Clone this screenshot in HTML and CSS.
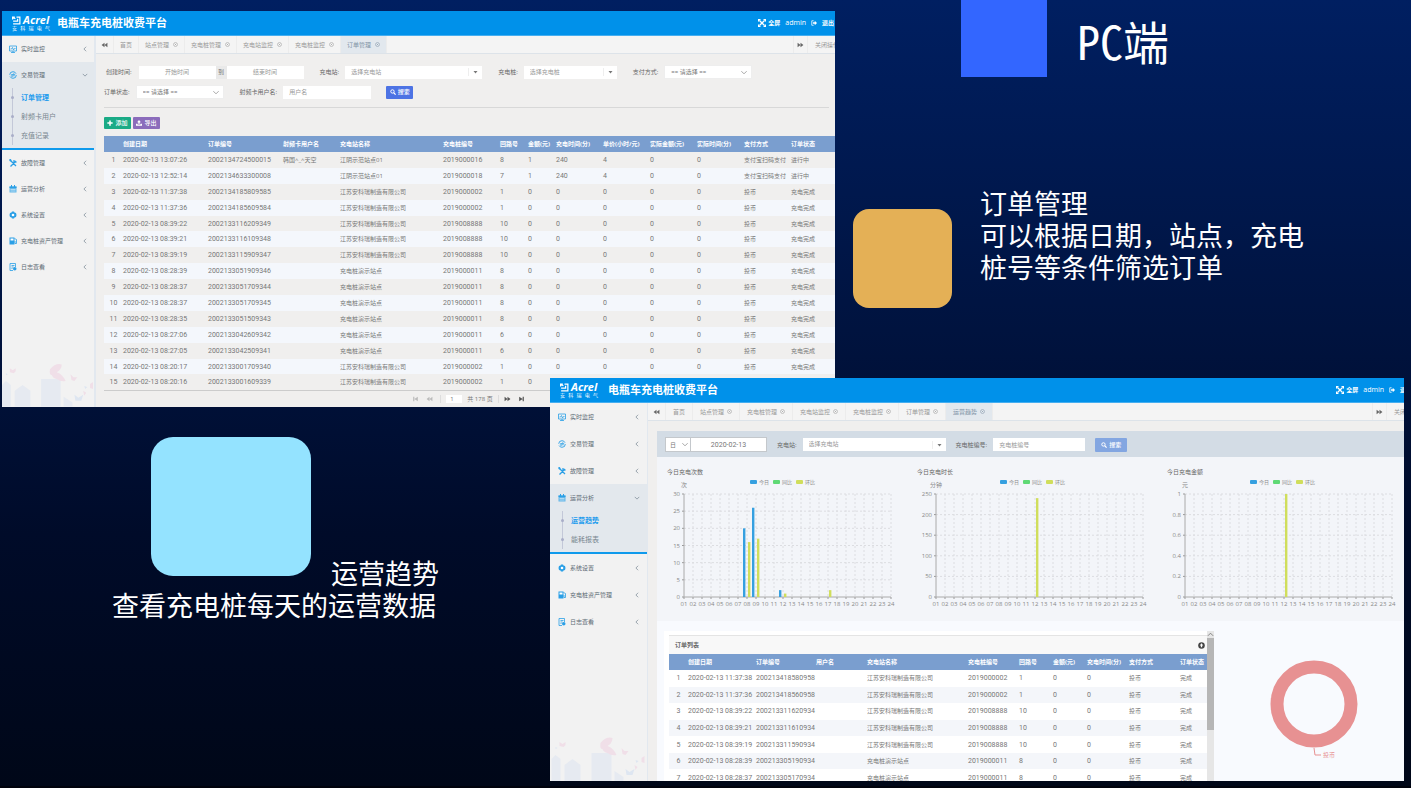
FILE: index.html
```html
<!DOCTYPE html>
<html lang="zh-CN">
<head>
<meta charset="utf-8">
<title>PC端</title>
<link rel="stylesheet" href="styles.css">
</head>
<body>
<svg class="sprite" aria-hidden="true">
  <symbol id="i-logo" viewBox="0 0 16 16"><path d="M8 2h6v12H2M2 9h8V5M1 2l5 3M1 6V2h4" fill="none" stroke="currentColor" stroke-width="2.2"/></symbol>
  <symbol id="i-monitor" viewBox="0 0 16 16"><path d="M1 2h14v10H1zM4 15h8M8 12v3M3 8h2l2-3 2 5 2-3h2" fill="none" stroke="currentColor" stroke-width="1.6"/></symbol>
  <symbol id="i-trade" viewBox="0 0 16 16"><circle cx="8" cy="8" r="6.6" fill="none" stroke="currentColor" stroke-width="1.8" stroke-dasharray="17 3.7"/><path d="M4.500 7h7l-2.500-2.500M11.500 9.500h-7L7 12" fill="none" stroke="currentColor" stroke-width="1.6"/></symbol>
  <symbol id="i-tools" viewBox="0 0 16 16"><path d="M2 2l12 12M14 4l-3 3L3 15M10 2l0 4 5 0" fill="none" stroke="currentColor" stroke-width="2.6"/><path d="M0 1l4-1 1 4-3 1z" fill="currentColor"/></symbol>
  <symbol id="i-cal" viewBox="0 0 16 16"><path d="M1 3h14v12H1z" fill="currentColor" opacity=".7"/><path d="M1 3h14v3H1zM4 0h2v4H4zM10 0h2v4h-2z" fill="currentColor"/><path d="M3 9h10M3 12h10" stroke="#fff" stroke-width="1"/></symbol>
  <symbol id="i-gear" viewBox="0 0 16 16"><path d="M6 1h4l1 2 3 1 1 4-1 4-3 1-1 2H6l-1-2-3-1-1-4 1-4 3-1z" fill="currentColor"/><circle cx="8" cy="8" r="2.6" fill="#fff"/></symbol>
  <symbol id="i-pump" viewBox="0 0 16 16"><path d="M1 1h10v14H1z" fill="currentColor"/><path d="M3 3h6v4H3z" fill="#fff"/><path d="M11 3l4 2v8h-3V8" fill="none" stroke="currentColor" stroke-width="1.6"/></symbol>
  <symbol id="i-log" viewBox="0 0 16 16"><path d="M2 1h11v7M2 1v14h6M5 5h6M5 8h4M5 11h2" fill="none" stroke="currentColor" stroke-width="1.6"/><circle cx="11.500" cy="11.500" r="3.500" fill="currentColor"/></symbol>
  <symbol id="i-left" viewBox="0 0 8 8"><path d="M5.500 1L2.500 4l3 3" fill="none" stroke="currentColor" stroke-width="1"/></symbol>
  <symbol id="i-down" viewBox="0 0 8 8"><path d="M1 2.500L4 5.500l3-3" fill="none" stroke="currentColor" stroke-width="1"/></symbol>
  <symbol id="i-caret" viewBox="0 0 8 8"><path d="M2 3h4L4 5.500z" fill="currentColor"/></symbol>
  <symbol id="i-close" viewBox="0 0 10 10"><circle cx="5" cy="5" r="4" fill="none" stroke="currentColor" stroke-width="1"/><path d="M3.500 3.500l3 3M6.500 3.500l-3 3" stroke="currentColor" stroke-width="1"/></symbol>
  <symbol id="i-back" viewBox="0 0 12 10"><path d="M6 1v8L1 5zM11 1v8L6 5z" fill="currentColor"/></symbol>
  <symbol id="i-fwd" viewBox="0 0 12 10"><path d="M1 1v8l5-4zM6 1v8l5-4z" fill="currentColor"/></symbol>
  <symbol id="i-first" viewBox="0 0 12 10"><path d="M2 1h2v8H2zM10 1v8L4 5z" fill="currentColor"/></symbol>
  <symbol id="i-last" viewBox="0 0 12 10"><path d="M8 1h2v8H8zM2 1v8l6-4z" fill="currentColor"/></symbol>
  <symbol id="i-full" viewBox="0 0 16 16"><path d="M3 3l10 10M13 3L3 13" stroke="currentColor" stroke-width="2.600"/><path d="M0 0h6L0 6zM16 0v6l-6-6zM0 16v-6l6 6zM16 16h-6l6-6z" fill="currentColor"/></symbol>
  <symbol id="i-exit" viewBox="0 0 16 16"><path d="M7 2H2v12h5" fill="none" stroke="currentColor" stroke-width="2"/><path d="M5 6h5V2l6 6-6 6v-4H5z" fill="currentColor"/></symbol>
  <symbol id="i-search" viewBox="0 0 16 16"><circle cx="6.500" cy="6.500" r="4.500" fill="none" stroke="currentColor" stroke-width="2.600"/><path d="M10 10l5 5" stroke="currentColor" stroke-width="3"/></symbol>
  <symbol id="i-plus" viewBox="0 0 16 16"><path d="M8 1v14M1 8h14" stroke="currentColor" stroke-width="4"/></symbol>
  <symbol id="i-export" viewBox="0 0 16 16"><path d="M8 0l5 6h-3v4H6V6H3zM0 10h4v2h8v-2h4v5H0z" fill="currentColor"/></symbol>
  <symbol id="i-up" viewBox="0 0 16 16"><circle cx="8" cy="8" r="7.500" fill="currentColor"/><path d="M8 3l4 5H9.500v4h-3V8H4z" fill="#fff"/></symbol>
  <symbol id="i-city" viewBox="0 0 94 46">
    <g fill="#e6eaf1"><path d="M0 24l4-4 5 4v22H0zM13 30l8-6 8 6v16H13zM40 18h20v28H40zM63 36l9 6v4h-9z"/></g>
    <g fill="#f0dfe8"><path d="M8 7l3 2 3-2v3l-2 2-4-1zM49 8q6-7 12-5 0 5-5 8 6 2 9 9-5 1-9-2-4-1-5-4-3 0-2-6zM70 13l3 3 4 0-3 4-3-1zM90 23l3-2v7l-3-1zM83 30l3 2-2 3z"/></g>
    <g fill="#dee6f1"><path d="M74 34l4 3 5-3-2 6-6 0zM84 25l3 1-2 2zM4 12l2 1-2 1z"/></g>
  </symbol>
</svg>

<main class="slide">
  <section class="win win-orders">
    <header class="bar">
      <div class="logo"><div class="logo-top"><svg><use href="#i-logo"/></svg><span>Acrel</span></div><div class="logo-sub"><span>安</span><span>科</span><span>瑞</span><span>电</span><span>气</span></div></div>
      <h2>电瓶车充电桩收费平台</h2>
      <nav class="user"><a href="#"><svg class="fs"><use href="#i-full"/></svg><b>全屏</b></a><a href="#">admin</a><a href="#"><svg><use href="#i-exit"/></svg></a><a href="#"><b>退出</b></a></nav>
    </header>
    <div class="body">
      <nav class="side">
        <a class="item" href="#"><svg><use href="#i-monitor"/></svg><span>实时监控</span><svg class="arr"><use href="#i-left"/></svg></a>
        <div class="open">
          <a class="item" href="#"><svg><use href="#i-trade"/></svg><span>交易管理</span><svg class="arr"><use href="#i-down"/></svg></a>
          <div class="subs"><a class="on" href="#">订单管理</a><a href="#">射频卡用户</a><a href="#">充值记录</a></div>
        </div>
        <a class="item" href="#"><svg><use href="#i-tools"/></svg><span>故障管理</span><svg class="arr"><use href="#i-left"/></svg></a>
        <a class="item" href="#"><svg><use href="#i-cal"/></svg><span>运营分析</span><svg class="arr"><use href="#i-left"/></svg></a>
        <a class="item" href="#"><svg><use href="#i-gear"/></svg><span>系统设置</span><svg class="arr"><use href="#i-left"/></svg></a>
        <a class="item" href="#"><svg><use href="#i-pump"/></svg><span>充电桩资产管理</span><svg class="arr"><use href="#i-left"/></svg></a>
        <a class="item" href="#"><svg><use href="#i-log"/></svg><span>日志查看</span><svg class="arr"><use href="#i-left"/></svg></a>
        <svg class="city"><use href="#i-city"/></svg>
      </nav>
      <div class="content">
        <nav class="tabs">
          <button class="step" aria-label="向左"><svg><use href="#i-back"/></svg></button>
          <a href="#">首页</a>
          <a href="#">站点管理<svg><use href="#i-close"/></svg></a>
          <a href="#">充电桩管理<svg><use href="#i-close"/></svg></a>
          <a href="#">充电站监控<svg><use href="#i-close"/></svg></a>
          <a href="#">充电桩监控<svg><use href="#i-close"/></svg></a>
          <a class="on" href="#">订单管理<svg><use href="#i-close"/></svg></a>
          <button class="step end" aria-label="向右"><svg><use href="#i-fwd"/></svg></button>
          <button class="ops">关闭操作</button>
        </nav>
        <div class="page">
          <form class="filters">
            <div class="frow">
              <label class="lab" for="d1">创建时间:</label>
              <div class="range"><input id="d1" placeholder="开始时间"><span>到</span><input aria-label="结束时间" placeholder="结束时间"></div>
              <label class="lab" for="s1">充电站:</label>
              <div class="pick w137"><select id="s1"><option>选择充电站</option></select><svg><use href="#i-caret"/></svg></div>
              <label class="lab" for="s2">充电桩:</label>
              <div class="pick w93"><select id="s2"><option>选择充电桩</option></select><svg><use href="#i-caret"/></svg></div>
              <label class="lab" for="s3">支付方式:</label>
              <div class="pick plain w87"><select id="s3"><option>== 请选择 ==</option></select><svg><use href="#i-down"/></svg></div>
            </div>
            <div class="frow second">
              <label class="lab" for="s4">订单状态:</label>
              <div class="pick plain w87"><select id="s4"><option>== 请选择 ==</option></select><svg><use href="#i-down"/></svg></div>
              <label class="lab" for="u1">射频卡用户名:</label>
              <input class="w87" id="u1" placeholder="用户名">
              <button class="btn search" type="button"><svg><use href="#i-search"/></svg>搜索</button>
            </div>
          </form>
          <div class="actions"><button class="btn add"><svg><use href="#i-plus"/></svg>添加</button><button class="btn export"><svg><use href="#i-export"/></svg>导出</button></div>
          <table class="grid" id="orders"></table>
          <div class="pager">
            <button class="dim" aria-label="第一页"><svg><use href="#i-first"/></svg></button><button class="dim" aria-label="上一页"><svg><use href="#i-back"/></svg></button>
            <i></i><input aria-label="页码" value="1"><span>共 178 页</span><i></i>
            <button aria-label="下一页"><svg><use href="#i-fwd"/></svg></button><button aria-label="最后一页"><svg><use href="#i-last"/></svg></button>
          </div>
        </div>
      </div>
    </div>
  </section>

  <div class="square"></div>
  <h1 class="title">PC端</h1>
  <div class="amber"></div>
  <p class="note note-orders">订单管理<br>可以根据日期，站点，充电桩号等条件筛选订单</p>
  <div class="cyan"></div>
  <p class="note note-trend">运营趋势<br>查看充电桩每天的运营数据</p>

  <section class="win win-trend">
    <header class="bar">
      <div class="logo"><div class="logo-top"><svg><use href="#i-logo"/></svg><span>Acrel</span></div><div class="logo-sub"><span>安</span><span>科</span><span>瑞</span><span>电</span><span>气</span></div></div>
      <h2>电瓶车充电桩收费平台</h2>
      <nav class="user"><a href="#"><svg class="fs"><use href="#i-full"/></svg><b>全屏</b></a><a href="#">admin</a><a href="#"><svg><use href="#i-exit"/></svg></a><a href="#"><b>退出</b></a></nav>
    </header>
    <div class="body">
      <nav class="side">
        <a class="item" href="#"><svg><use href="#i-monitor"/></svg><span>实时监控</span><svg class="arr"><use href="#i-left"/></svg></a>
        <a class="item" href="#"><svg><use href="#i-trade"/></svg><span>交易管理</span><svg class="arr"><use href="#i-left"/></svg></a>
        <a class="item" href="#"><svg><use href="#i-tools"/></svg><span>故障管理</span><svg class="arr"><use href="#i-left"/></svg></a>
        <div class="open">
          <a class="item" href="#"><svg><use href="#i-cal"/></svg><span>运营分析</span><svg class="arr"><use href="#i-down"/></svg></a>
          <div class="subs"><a class="on" href="#">运营趋势</a><a href="#">能耗报表</a></div>
        </div>
        <a class="item" href="#"><svg><use href="#i-gear"/></svg><span>系统设置</span><svg class="arr"><use href="#i-left"/></svg></a>
        <a class="item" href="#"><svg><use href="#i-pump"/></svg><span>充电桩资产管理</span><svg class="arr"><use href="#i-left"/></svg></a>
        <a class="item" href="#"><svg><use href="#i-log"/></svg><span>日志查看</span><svg class="arr"><use href="#i-left"/></svg></a>
        <svg class="city"><use href="#i-city"/></svg>
      </nav>
      <div class="content">
        <nav class="tabs">
          <button class="step" aria-label="向左"><svg><use href="#i-back"/></svg></button>
          <a href="#">首页</a>
          <a href="#">站点管理<svg><use href="#i-close"/></svg></a>
          <a href="#">充电桩管理<svg><use href="#i-close"/></svg></a>
          <a href="#">充电站监控<svg><use href="#i-close"/></svg></a>
          <a href="#">充电桩监控<svg><use href="#i-close"/></svg></a>
          <a href="#">订单管理<svg><use href="#i-close"/></svg></a>
          <a class="on" href="#">运营趋势<svg><use href="#i-close"/></svg></a>
          <button class="step end" aria-label="向右"><svg><use href="#i-fwd"/></svg></button>
          <button class="ops">关闭操作</button>
        </nav>
        <div class="panel">
          <form class="strip">
            <div class="day"><div class="pick plain"><select aria-label="周期"><option>日</option></select><svg><use href="#i-down"/></svg></div><input class="num" aria-label="日期" value="2020-02-13"></div>
            <label class="lab" for="t1">充电站:</label>
            <div class="pick w143"><select id="t1"><option>选择充电站</option></select><svg><use href="#i-caret"/></svg></div>
            <label class="lab" for="t2">充电桩编号:</label>
            <input class="w92" id="t2" placeholder="充电桩编号">
            <button class="btn search soft" type="button"><svg><use href="#i-search"/></svg>搜索</button>
          </form>
          <div class="charts">
            <figure><figcaption>今日充电次数</figcaption><svg id="c1" viewBox="0 0 250 134"></svg></figure>
            <figure><figcaption>今日充电时长</figcaption><svg id="c2" viewBox="0 0 250 134"></svg></figure>
            <figure><figcaption>今日充电金额</figcaption><svg id="c3" viewBox="0 0 250 134"></svg></figure>
          </div>
          <div class="lower">
            <div class="listbox">
              <div class="list">
                <div class="list-head"><b>订单列表</b><svg><use href="#i-up"/></svg></div>
                <table class="grid" id="recent"></table>
              </div>
              <div class="scroll"><svg><use href="#i-down"/></svg><div class="thumb"></div></div>
            </div>
            <svg class="donut" viewBox="0 0 100 108"><circle cx="50" cy="50" r="37" fill="none" stroke="#e79192" stroke-width="13"/><path d="M50 94l1 7h6" fill="none" stroke="#e79192" stroke-width="1"/><text x="59" y="103" fill="#e79192">投币</text></svg>
          </div>
        </div>
      </div>
    </div>
  </section>
</main>
<script src="app.js"></script>
</body>
</html>
```
FILE: styles.css
```css
* { box-sizing: border-box; }

body {
  margin: 0;
  font-family: "Open Sans", "Noto Sans CJK SC", sans-serif;
  font-size: 6px;
  line-height: 10px;
  color: #777;
}

a { color: inherit; text-decoration: none; }
svg { display: block; flex: none; }
.sprite { position: absolute; width: 0; height: 0; }

button, input, select {
  margin: 0;
  padding: 0;
  border: 0;
  background: none;
  font: inherit;
  color: inherit;
  min-width: 0;
}

/* slide */
.slide {
  position: relative;
  min-height: 100vh;
  overflow: hidden;
  background: linear-gradient(#001f61, #00133f 42%, #000b29 68%, #000718);
  border-bottom: 2px solid #00020c;
}
.square { position: absolute; left: 961px; top: 0; width: 86px; height: 77px; background: #36f; }
.amber { position: absolute; left: 853px; top: 209px; width: 99px; height: 99px; border-radius: 16px; background: #e4b056; }
.cyan { position: absolute; left: 151px; top: 437px; width: 160px; height: 139px; border-radius: 22px; background: #94e3ff; }
.title {
  position: absolute;
  left: 1077px;
  top: 8px;
  margin: 0;
  font: 400 46px/64px "Noto Sans Mono CJK SC", "Noto Sans CJK SC", sans-serif;
  color: #fff;
}
.note {
  position: absolute;
  width: 332px;
  margin: 0;
  font: 400 27px/32px "Noto Sans CJK SC", sans-serif;
  color: #fff;
}
.note-orders { left: 980px; top: 187px; }
.note-trend { left: 112px; top: 557px; text-indent: 219px; }

/* windows */
.win { position: absolute; display: flex; flex-direction: column; overflow: hidden; background: #f0efee; }
.win-orders { left: 2px; right: 576px; top: 11px; }
.win-trend { left: 550px; right: 7px; top: 378px; bottom: 5px; }

.bar {
  display: flex;
  align-items: center;
  height: 25px;
  padding: 0 1px 0 10px;
  flex: none;
  background: #0091ea;
  border-bottom: 1px solid #45aef0;
  color: #fff;
}
.bar h2 { margin: 0 0 0 7px; font-size: 11px; line-height: 16px; font-weight: 700; white-space: nowrap; }
.win-trend h2 { margin-left: 10px; }
.logo { width: 38px; }
.logo-top { display: flex; align-items: center; gap: 2px; font: italic 700 11px/10px "Open Sans", sans-serif; }
.logo-top svg { width: 9px; height: 9px; }
.logo-sub { display: flex; justify-content: space-between; font-size: 5px; line-height: 6px; }
.user { display: flex; align-items: center; gap: 5px; margin-left: auto; }
.user a { display: flex; align-items: center; gap: 2px; font-size: 6px; }
.user a:nth-child(2) { font-size: 7px; }
.user svg { width: 6px; height: 6px; }
.user .fs { width: 8px; height: 8px; }
.win-trend .user { margin-right: -9px; }

.body { display: flex; flex: 1; min-height: 0; }
.side {
  display: flex;
  flex-direction: column;
  flex: none;
  width: 94px;
  background: #f2f2f2;
  border-right: 2px solid #e2e8ef;
  color: #66757f;
}
.win-trend .side { width: 98px; border-right-width: 1px; }
.item { display: flex; align-items: center; gap: 4px; height: 26px; padding: 0 6px 0 7px; color: #5d6b75; flex: none; }
.win-trend .item { height: 27px; padding: 0 7px 0 8px; }
.item svg { width: 8px; height: 8px; color: #2a9fe6; }
.item .arr { width: 6px; height: 6px; margin-left: auto; color: #7c8a95; }
.open { background: #e3e8ed; border-bottom: 2px solid #0f9aec; padding-bottom: 3px; flex: none; }
.subs { display: flex; flex-direction: column; margin-left: 10px; border-left: 1px solid #c3c8d8; }
.win-trend .subs { margin-left: 12px; }
.subs a { display: flex; align-items: center; gap: 7px; height: 19px; font-size: 7px; color: #7a8790; }
.subs a::before { content: ""; width: 3px; height: 3px; margin-left: -2px; border-radius: 50%; background: #a9aec8; }
.subs .on { color: #1c9bee; font-weight: 700; }
.city { width: 100%; height: 46px; margin-top: auto; }

.content { flex: 1; min-width: 0; display: flex; flex-direction: column; }
.tabs { display: flex; flex: none; height: 18px; background: #f4f4f4; border-bottom: 1px solid #dde3e9; color: #999; overflow: hidden; }
.tabs a { display: flex; align-items: center; gap: 4px; padding: 0 6px; border-right: 1px solid #ececec; white-space: nowrap; flex: none; }
.win-trend .tabs a { gap: 3px; padding: 0 7px; }
.tabs svg { width: 5px; height: 5px; }
.tabs .on { background: #e2e8ee; color: #7f93a6; }
.step { width: 18px; display: flex; align-items: center; justify-content: center; border-right: 1px solid #ececec; color: #666; flex: none; }
.tabs .step svg { width: 7px; height: 6px; }
.end { margin-left: auto; width: 15px; border-left: 1px solid #ececec; }
.ops { width: 27px; padding-left: 7px; text-align: left; white-space: nowrap; overflow: hidden; flex: none; }
.win-trend .ops { width: 17px; }

/* order page */
.page { padding: 11px 0 0 8px; }
.filters { display: flex; flex-direction: column; gap: 6px; margin-right: 6px; padding-bottom: 8px; border-bottom: 1px solid #d8d8d8; }
.frow { display: flex; align-items: center; height: 14px; }
.lab { white-space: nowrap; color: #666; margin: 0 6px 0 16px; }
.frow .lab:first-child { margin-left: 2px; }
.frow.second .lab:first-child { margin-left: 0; }
.frow input, .strip input { height: 13px; background: #fff; padding-left: 6px; }
.range { display: flex; margin-left: 1px; }
.range input { width: 77px; padding: 0; text-align: center; }
.range span { width: 11px; line-height: 13px; text-align: center; background: #e9e9e9; }
input::placeholder { color: #999; opacity: 1; }
.pick { display: flex; align-items: center; height: 13px; background: #fff; }
.pick select { appearance: none; flex: 1; padding-left: 6px; line-height: 13px; height: 13px; color: #999; }
.pick svg { width: 14px; height: 8px; border-left: 1px solid #eee; }
.pick.plain { height: 14px; border: 1px solid #eee; }
.pick.plain svg { border: 0; height: 7px; color: #999; }
.pick.plain select { color: #777; height: 12px; line-height: 12px; }
.w87 { width: 88px; }
.w92 { width: 92px; }
.w93 { width: 93px; }
.w137 { width: 137px; }
.w143 { width: 143px; }
.btn {
  display: flex;
  align-items: center;
  justify-content: center;
  gap: 2px;
  width: 27px;
  height: 12px;
  border-radius: 1px;
  color: #fff;
  font-weight: 500;
}
.btn svg { width: 6px; height: 6px; }
.search { height: 13px; margin-left: 15px; background: #4d73e4; }
.add { background: #1bab86; }
.export { background: #8b6cbb; }
.actions { display: flex; gap: 2px; padding: 9px 0 7px; }

.num { font-family: Roboto, sans-serif; font-size: 7px; }
.grid { width: 100%; border-collapse: collapse; table-layout: fixed; }
.grid thead tr { height: 16px; }
.grid th { padding: 0; height: 16px; text-align: left; color: #fff; font-weight: 700; background: #7a9ecf; white-space: nowrap; }
.grid td { padding: 0; white-space: nowrap; }
.grid td:first-child { text-align: center; }
.grid tbody td { height: 15px; }
#orders { height: 255px; border-bottom: 1px solid #ccc; }
#orders tr:nth-child(odd) td { background: #f0efee; }
#orders tr:nth-child(even) td { background: #f4f7fc; }
.pager { display: flex; align-items: center; justify-content: center; gap: 5px; height: 16px; }
.pager svg { width: 7px; height: 6px; }
.pager button { color: #555; width: 9px; }
.pager .dim { color: #bbb; }
.pager i { width: 1px; height: 8px; background: #ddd; }
.pager input { width: 16px; height: 8px; background: #fff; padding-left: 4px; }

/* trend page */
.panel { flex: 1; min-height: 0; margin: 10px 0 0 9px; display: flex; flex-direction: column; background: #f8fafe; overflow: hidden; }
.strip { display: flex; align-items: center; flex: none; height: 26px; padding: 1px 8px 0; background: #d3dce5; }
.strip .lab { margin-left: 10px; }
.day { display: flex; border: 1px solid #c4c8cc; }
.day .pick.plain { width: 25px; height: 13px; border: 0; border-right: 1px solid #c4c8cc; }
.day .pick select { padding-left: 4px; }
.day .pick svg { width: 10px; }
.strip .day input { width: 75px; padding: 0; text-align: center; }
.strip .btn { width: 32px; height: 14px; margin-left: 10px; }
.soft { background: #83a6e1; }
.charts { display: grid; grid-template-columns: repeat(3, 1fr); flex: none; height: 164px; margin-right: -3px; padding-top: 10px; background: #f3f5f9; }
.charts figure { margin: 0; min-width: 0; }
.charts figcaption { padding-left: 10px; color: #666; }
.charts svg { width: 100%; overflow: visible; }
.charts text { font-size: 6px; fill: #888; }
.charts .key { font-size: 5px; }
.lower { flex: 1; min-height: 0; display: flex; justify-content: space-between; padding: 10px 40px 0 7px; }
.listbox { display: flex; flex: none; width: 550px; background: #fff; overflow: hidden; }
.list { flex: 1; min-width: 0; padding: 4px 0 0 5px; overflow: hidden; }
.list-head { display: flex; align-items: center; justify-content: space-between; height: 19px; padding: 0 2px 0 6px; background: #f8f8f8; border-top: 1px solid #e4e4e4; color: #666; }
.list-head svg { width: 7px; height: 7px; color: #444; }
#recent { height: 132px; }
#recent tr:nth-child(odd) td { background: #fff; }
#recent tr:nth-child(even) td { background: #f4f6fa; }
.scroll { width: 7px; background: #e6e6e6; flex: none; }
.scroll svg { width: 7px; height: 7px; transform: rotate(180deg); }
.thumb { height: 92px; background: #b6b6b6; }
.donut { width: 100px; height: 108px; margin-top: 23px; font-size: 6px; }
```
FILE: app.js
```js
const isNum = t => /^[\d\-: ]+$/.test(t);

function fillTable(id, widths, heads, rows) {
  const cols = widths.map(w => `<col${w ? ` style="width:${w}px"` : ''}>`).join('');
  const head = ['', ...heads].map(h => `<th>${h}</th>`).join('');
  const body = rows.map((r, i) => '<tr>' + [String(i + 1), ...r]
    .map(c => `<td${isNum(c) ? ' class="num"' : ''}>${c}</td>`).join('') + '</tr>').join('');
  document.getElementById(id).innerHTML =
    `<colgroup>${cols}</colgroup><thead><tr>${head}</tr></thead><tbody>${body}</tbody>`;
}

const js = '江苏安科瑞制造有限公司';
const demo = '充电桩演示站点';
const done = (time, no, site, pile, loop) =>
  ['2020-02-13 ' + time, no, '', site, pile, loop, '0', '0', '0', '0', '0', '投币', '充电完成'];

fillTable('orders', [19, 85, 75, 57, 103, 57, 28, 28, 47, 47, 47, 47, 47, 0],
  ['创建日期', '订单编号', '射频卡用户名', '充电站名称', '充电桩编号', '回路号', '金额(元)', '充电时间(分)',
    '单价(小时/元)', '实际金额(元)', '实际时间(分)', '支付方式', '订单状态'],
  [
    ['2020-02-13 13:07:26', '2002134724500015', '韩国^_^天空', '江阴示范站点01', '2019000016', '8', '1', '240', '4', '0', '0', '支付宝扫码支付', '进行中'],
    ['2020-02-13 12:52:14', '2002134633300008', '', '江阴示范站点01', '2019000018', '7', '1', '240', '4', '0', '0', '支付宝扫码支付', '进行中'],
    done('11:37:38', '2002134185809585', js, '2019000002', '1'),
    done('11:37:36', '2002134185609584', js, '2019000002', '1'),
    done('08:39:22', '2002133116209349', js, '2019008888', '10'),
    done('08:39:21', '2002133116109348', js, '2019008888', '10'),
    done('08:39:19', '2002133115909347', js, '2019008888', '10'),
    done('08:28:39', '2002133051909346', demo, '2019000011', '8'),
    done('08:28:37', '2002133051709344', demo, '2019000011', '8'),
    done('08:28:37', '2002133051709345', demo, '2019000011', '8'),
    done('08:28:35', '2002133051509343', demo, '2019000011', '8'),
    done('08:27:06', '2002133042609342', demo, '2019000011', '6'),
    done('08:27:05', '2002133042509341', demo, '2019000011', '6'),
    done('08:20:17', '2002133001709340', js, '2019000002', '1'),
    done('08:20:16', '2002133001609339', js, '2019000002', '1')
  ]);

const recent = (time, no, site, pile, loop) =>
  ['2020-02-13 ' + time, no, '', site, pile, loop, '0', '0', '投币', '完成'];

fillTable('recent', [19, 68, 60, 51, 101, 51, 34, 34, 42, 51, 0],
  ['创建日期', '订单编号', '用户名', '充电站名称', '充电桩编号', '回路号', '金额(元)', '充电时间(分)', '支付方式', '订单状态'],
  [
    recent('11:37:38', '200213418580958', js, '2019000002', '1'),
    recent('11:37:36', '200213418560958', js, '2019000002', '1'),
    recent('08:39:22', '200213311620934', js, '2019008888', '10'),
    recent('08:39:21', '200213311610934', js, '2019008888', '10'),
    recent('08:39:19', '200213311590934', js, '2019008888', '10'),
    recent('08:28:39', '200213305190934', demo, '2019000011', '8'),
    recent('08:28:37', '200213305170934', demo, '2019000011', '8')
  ]);

const BLUE = '#36a0e0', GREEN = '#5fd975', LIME = '#d0de5c';

function drawChart(id, x0, unit, max, step, bars) {
  const top = 17, bottom = 120, w = 207, gap = w / 23;
  let s = '';
  for (let i = 0; i < 24; i++) {
    const x = x0 + i * gap;
    if (i) s += `<path d="M${x} ${top}V${bottom}" stroke="#dcdde1" stroke-dasharray="2 2"/>`;
    s += `<path d="M${x} ${bottom}v2" stroke="#999"/>`;
    s += `<text x="${x}" y="129" text-anchor="middle">${String(i + 1).padStart(2, '0')}</text>`;
  }
  const n = Math.round(max / step);
  for (let i = 0; i <= n; i++) {
    const y = bottom - (bottom - top) * i / n;
    if (i) s += `<path d="M${x0} ${y}h${w}" stroke="#dcdde1" stroke-dasharray="2 2"/>`;
    s += `<path d="M${x0 - 2} ${y}h2" stroke="#999"/>`;
    s += `<text x="${x0 - 4}" y="${y + 2}" text-anchor="end">${+(i * step).toFixed(1)}</text>`;
  }
  s += `<path d="M${x0} ${top}V${bottom}H${x0 + w}" fill="none" stroke="#aaa"/>`;
  for (const [hour, value, color] of bars) {
    const x = x0 + (hour - 1) * gap + (color === BLUE ? -4 : 1);
    const h = (bottom - top) * value / max;
    s += `<rect x="${x}" y="${bottom - h}" width="2.4" height="${h}" fill="${color}"/>`;
  }
  s += `<text x="${x0}" y="10" text-anchor="middle">${unit}</text>`;
  [['今日', BLUE], ['同比', GREEN], ['环比', LIME]].forEach(([name, color], i) => {
    const x = 93 + i * 23;
    s += `<rect x="${x}" y="3" width="7" height="4" rx="1" fill="${color}"/><text class="key" x="${x + 9}" y="7">${name}</text>`;
  });
  document.getElementById(id).innerHTML = s;
}

drawChart('c1', 27, '次', 30, 5, [[8, 20, BLUE], [8, 16, LIME], [9, 26, BLUE], [9, 17, LIME], [12, 2, BLUE], [12, 1, LIME], [17, 2, LIME]]);
drawChart('c2', 29, '分钟', 250, 50, [[12, 240, LIME]]);
drawChart('c3', 28, '元', 1, 0.2, [[12, 1, LIME]]);
```
